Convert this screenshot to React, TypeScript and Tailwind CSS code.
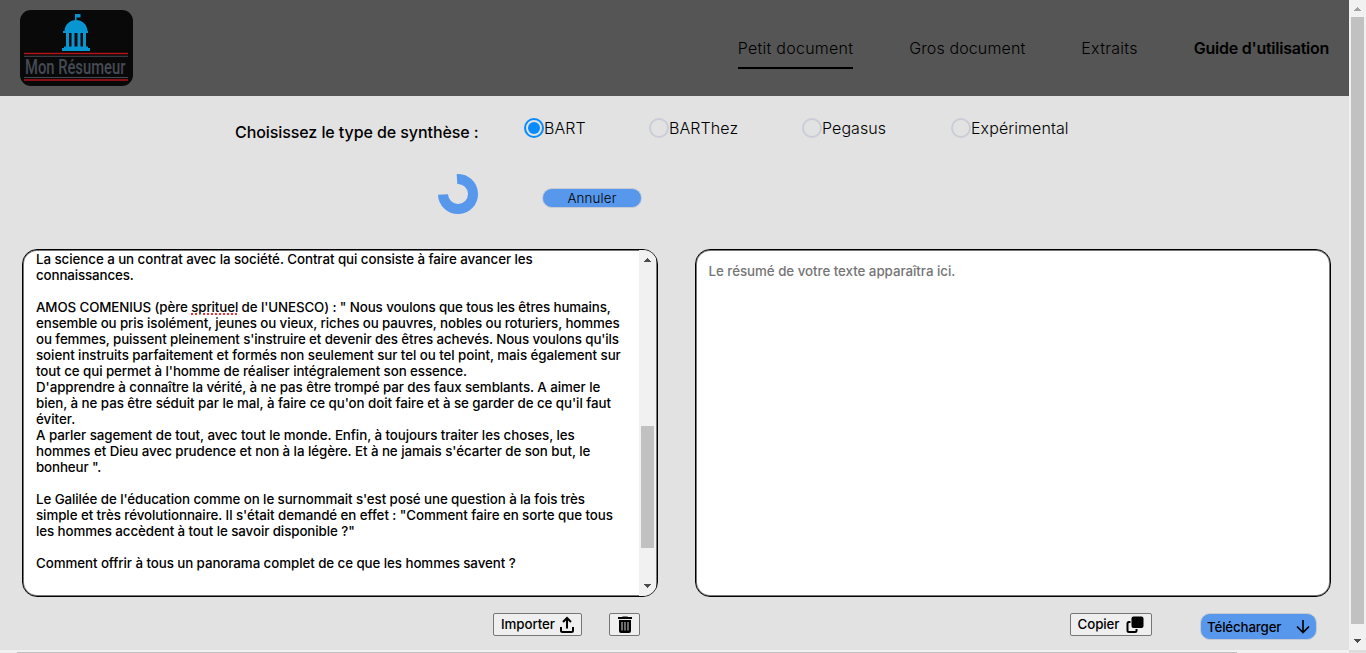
import React from "react";

const lines: { text: string; tracking: string }[] = [
  { text: "La science a un contrat avec la société. Contrat qui consiste à faire avancer les", tracking: "tracking-[-0.06px]" },
  { text: "connaissances.", tracking: "tracking-[-0.12px]" },
  { text: "", tracking: "" },
  { text: "AMOS COMENIUS (père |sprituel| de l'UNESCO) : \" Nous voulons que tous les êtres humains,", tracking: "tracking-[-0.105px]" },
  { text: "ensemble ou pris isolément, jeunes ou vieux, riches ou pauvres, nobles ou roturiers, hommes", tracking: "tracking-[-0.11px]" },
  { text: "ou femmes, puissent pleinement s'instruire et devenir des êtres achevés. Nous voulons qu'ils", tracking: "tracking-[-0.11px]" },
  { text: "soient instruits parfaitement et formés non seulement sur tel ou tel point, mais également sur", tracking: "tracking-[-0.06px]" },
  { text: "tout ce qui permet à l'homme de réaliser intégralement son essence.", tracking: "tracking-[-0.075px]" },
  { text: "D'apprendre à connaître la vérité, à ne pas être trompé par des faux semblants. A aimer le", tracking: "tracking-[-0.065px]" },
  { text: "bien, à ne pas être séduit par le mal, à faire ce qu'on doit faire et à se garder de ce qu'il faut", tracking: "tracking-[-0.055px]" },
  { text: "éviter.", tracking: "" },
  { text: "A parler sagement de tout, avec tout le monde. Enfin, à toujours traiter les choses, les", tracking: "tracking-[-0.055px]" },
  { text: "hommes et Dieu avec prudence et non à la légère. Et à ne jamais s'écarter de son but, le", tracking: "tracking-[-0.055px]" },
  { text: "bonheur \".", tracking: "tracking-[-0.12px]" },
  { text: "", tracking: "" },
  { text: "Le Galilée de l'éducation comme on le surnommait s'est posé une question à la fois très", tracking: "tracking-[-0.085px]" },
  { text: "simple et très révolutionnaire. Il s'était demandé en effet : \"Comment faire en sorte que tous", tracking: "tracking-[-0.065px]" },
  { text: "les hommes accèdent à tout le savoir disponible ?\"", tracking: "tracking-[-0.08px]" },
  { text: "", tracking: "" },
  { text: "Comment offrir à tous un panorama complet de ce que les hommes savent ?", tracking: "tracking-[-0.07px]" },
];

function Logo() {
  return (
    <svg width="113" height="76" viewBox="0 0 113 76" className="block">
      <rect width="113" height="76" rx="11" fill="#090909" />
      <g fill="#0796d2">
        <path d="M55 4h5.500v3.500h-4v4H55z" />
        <path d="M44.500 21C45 14 50 10 56 10s11 4 11.500 11H68v2H43v-2z" />
        <path d="M46 22h3v15h-3zM51.500 22h3v15h-3zM57.500 22h3v15h-3zM63 22h3v15h-3z" />
        <path d="M44 36.500h24v1.500h2v3H42v-3h2z" />
      </g>
      <path d="M4 43.500h104M4 70h104" stroke="#b31319" strokeWidth="1.400" />
      <path d="M4 46.300h104M4 67.500h104" stroke="#454a55" strokeWidth="1" />
      <text transform="translate(5 64) scale(0.72 1)" fill="#454a55" fontSize="20.500" fontFamily="Roboto, sans-serif" fontWeight="500">Mon Résumeur</text>
    </svg>
  );
}

function Radio({ label, checked, className }: { label: string; checked?: boolean; className: string }) {
  return (
    <div className={"flex h-5 items-center whitespace-nowrap text-base font-light tracking-[0.08px] " + className}>
      <svg width="20" height="20" viewBox="0 0 20 20" className="shrink-0">
        <circle cx="10" cy="10" r="9" fill="none" stroke={checked ? "#078bff" : "#cacdd7"} strokeWidth="2" />
        {checked && <circle cx="10" cy="10" r="6" fill="#078bff" />}
      </svg>
      <span>{label}</span>
    </div>
  );
}

function Arrow({ down, color = "#4d4d4d" }: { down?: boolean; color?: string }) {
  return (
    <svg width="8" height="4" viewBox="0 0 8 4" className="block" shapeRendering="crispEdges">
      <path d={down ? "M0 0h8L4 4z" : "M0 4h8L4 0z"} fill={color} />
    </svg>
  );
}

export default function App() {
  return (
    <div className="flex h-[653px] w-[1366px] overflow-hidden bg-[#e2e2e2] font-['Inter',sans-serif] text-black">
      <div className="flex w-[1349px] flex-col">
        <header className="flex h-24 shrink-0 items-start justify-between bg-[#555555] pl-5 pr-5">
          <div className="pt-2.5"><Logo /></div>
          <nav className="flex gap-14 pt-9 text-base font-light whitespace-nowrap">
            <span className="h-[33px] border-b-2 border-black tracking-[0.25px]">Petit document</span>
            <span className="tracking-[0.12px]">Gros document</span>
            <span className="tracking-[0.28px]">Extraits</span>
            <span className="font-semibold tracking-[-0.25px]">Guide d'utilisation</span>
          </nav>
        </header>
        <div className="flex h-[62px] shrink-0 pl-[235px] pt-[22px]">
          <div className="mt-0.5 w-[289px] text-base font-medium tracking-[-0.08px] whitespace-nowrap">Choisissez le type de synthèse :</div>
          <Radio label="BART" checked className="w-[125px]" />
          <Radio label="BARThez" className="w-[153px]" />
          <Radio label="Pegasus" className="w-[149px]" />
          <Radio label="Expérimental" className="" />
        </div>
        <div className="flex h-[91px] shrink-0 pl-[438px] pt-4">
          <svg width="40" height="40" viewBox="0 0 40 40" className="shrink-0">
            <path d="M19 5.030A15 15 0 1 1 5 20.500" fill="none" stroke="#5797ec" strokeWidth="10" />
          </svg>
          <button className="mt-3.5 ml-16 flex h-5 w-[100px] items-center justify-center rounded-[10px] border border-[#c6cbd3] bg-[#5797ec] pt-px text-[13.333px] font-light tracking-[0.15px]">Annuler</button>
        </div>
        <main className="flex h-[348px] shrink-0 gap-[37px] pl-[22px]">
          <div className="flex w-[636px] overflow-hidden rounded-[15px] border-[1.500px] border-black bg-white shadow-[inset_0_0_0_1px_#777]">
            <div className="w-[616px] pt-px pl-[13px] text-[13.333px] leading-4 font-medium whitespace-pre">
              {lines.map(({ text, tracking }, i) => {
                const parts = text.split("|");
                return (
                  <div key={i} className={"h-4 " + tracking}>
                    {parts.length === 3 ? <>{parts[0]}<span className="underline decoration-red-500 decoration-dotted decoration-2 underline-offset-1">{parts[1]}</span>{parts[2]}</> : text}
                  </div>
                );
              })}
            </div>
            <div className="mr-px flex w-[17px] flex-col items-center bg-[#f1f1f1]">
              <div className="pt-2 pr-px"><Arrow /></div>
              <div className="mt-[164px] h-[122px] w-[13px] bg-[#c1c1c1]" />
              <div className="pt-9 pr-px"><Arrow down /></div>
            </div>
          </div>
          <div className="w-[636px] rounded-[15px] border-[1.500px] border-black bg-white pt-[13px] pl-[12.500px] text-[13.333px] leading-4 font-medium tracking-[-0.04px] text-[#757575] shadow-[inset_0_0_0_1px_#777]">Le résumé de votre texte apparaîtra ici.</div>
        </main>
        <div className="flex h-[53px] shrink-0 items-start pt-4 pl-[493px] text-[13.333px] font-medium">
          <button className="flex h-[23px] w-[89px] items-center rounded-[2px] border border-[#767676] bg-[#efefef] pl-[7px] tracking-[-0.08px]">
            Importer
            <svg width="14" height="17" viewBox="0 0 14 17" className="ml-[5.500px] shrink-0" fill="none" stroke="black" strokeWidth="2"><path d="M7 12.500V2M3 6L7 2l4 4M1 11v3.500q0 1.500 1.500 1.500h9q1.500 0 1.500-1.500V11" /></svg>
          </button>
          <button className="ml-[27px] flex h-[23px] w-[31px] items-center justify-center rounded-[2px] border border-[#767676] bg-[#efefef]">
            <svg width="16" height="18" viewBox="0 0 16 18"><path d="M5 1Q5 .5 6 .5h4q1 0 1 .5h4v2H1V1zM2 4h12v11q0 2-2 2H4q-2 0-2-2z" /><path d="M5 6v8.500M8 6v8.500M11 6v8.500" stroke="#d8d8d8" strokeWidth="1" /></svg>
          </button>
          <button className="ml-[430px] flex h-[23px] w-[82px] items-center rounded-[2px] border border-[#767676] bg-[#efefef] pl-[6.500px] tracking-[-0.08px]">
            Copier
            <svg width="18" height="18" viewBox="0 0 18 18" className="ml-[7px] shrink-0"><path d="M4.500 6H3Q1.500 6 1.500 7.500v7Q1.500 16 3 16h6q1.500 0 1.500-1.500V13" fill="none" stroke="black" strokeWidth="2" /><rect x="5.500" y="0.500" width="12" height="11.500" rx="2" /></svg>
          </button>
          <button className="ml-12 flex h-[27px] w-[117px] items-center rounded-[10px] border border-[#c6cbd3] bg-[#5797ec] pl-[6px] tracking-[-0.16px]">
            <span className="pt-[3px]">Télécharger</span>
            <svg width="14" height="15" viewBox="0 0 14 15" className="ml-[15px] shrink-0" fill="none" stroke="black" strokeWidth="1.600"><path d="M7 1v12M1 7.500l6 6 6-6" /></svg>
          </button>
        </div>
        <div className="h-[3px] bg-[#f1f1f1] pt-0.5 pl-[17px]"><div className="h-px w-[1220px] bg-[#c1c1c1]" /></div>
      </div>
      <div className="flex w-[17px] flex-col items-center bg-[#f1f1f1]">
        <div className="pt-[7px] pr-px"><Arrow color="#a3a3a3" /></div>
        <div className="mt-[6px] h-[607px] w-[13px] bg-[#c1c1c1]" />
        <div className="pt-[15px] pr-px"><Arrow down /></div>
        <div className="mt-auto h-[3px] w-full bg-[#dcdcdc]" />
      </div>
    </div>
  );
}
